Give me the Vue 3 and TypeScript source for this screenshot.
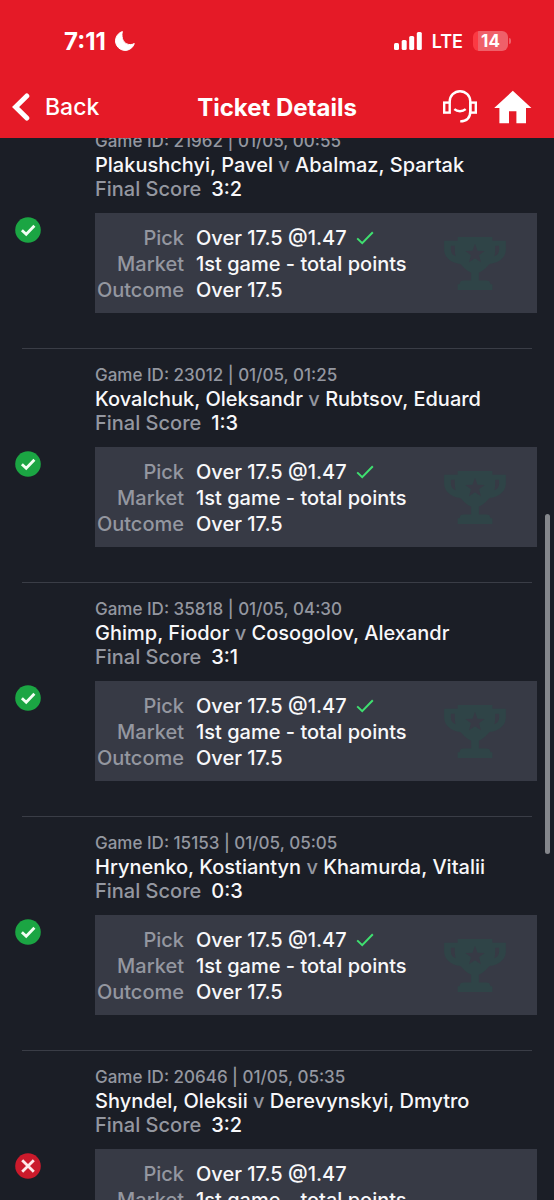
<script setup lang="ts">
interface Selection {
  id: string
  time: string
  home: string
  away: string
  score: string
  won: boolean
}

const selections: Selection[] = [
  { id: '21962', time: '01/05, 00:55', home: 'Plakushchyi, Pavel', away: 'Abalmaz, Spartak', score: '3:2', won: true },
  { id: '23012', time: '01/05, 01:25', home: 'Kovalchuk, Oleksandr', away: 'Rubtsov, Eduard', score: '1:3', won: true },
  { id: '35818', time: '01/05, 04:30', home: 'Ghimp, Fiodor', away: 'Cosogolov, Alexandr', score: '3:1', won: true },
  { id: '15153', time: '01/05, 05:05', home: 'Hrynenko, Kostiantyn', away: 'Khamurda, Vitalii', score: '0:3', won: true },
  { id: '20646', time: '01/05, 05:35', home: 'Shyndel, Oleksii', away: 'Derevynskyi, Dmytro', score: '3:2', won: false },
]
</script>

<template>
  <div class="screen">
    <header class="top">
      <div class="status-bar">
        <div class="clock">
          <span>7:11</span>
          <svg width="20" height="20" viewBox="0 0 20 20" aria-hidden="true">
            <path d="M7.4 0.6A9.6 9.6 0 1 0 19.3 12.6C14 15.2 8.6 12.4 7.4 7.4C6.8 4.6 6.8 2.4 7.4.6Z" fill="#fff" stroke="#fff" stroke-width="1" stroke-linejoin="round" />
          </svg>
        </div>
        <div class="signals">
          <svg width="28" height="18" viewBox="0 0 28 18" aria-hidden="true">
            <g fill="#fff">
              <rect x="0" y="11" width="5" height="7" rx="1.5" />
              <rect x="7.7" y="8" width="5" height="10" rx="1.5" />
              <rect x="15.2" y="4" width="5" height="14" rx="1.5" />
              <rect x="22.8" y="0" width="5" height="18" rx="1.5" />
            </g>
          </svg>
          <span class="network">LTE</span>
          <span class="battery">14</span>
        </div>
      </div>
      <nav class="nav">
        <button class="back" type="button">
          <svg width="18" height="28" viewBox="0 0 18 28" aria-hidden="true">
            <path d="M14.8 3L3.6 14L14.8 25" fill="none" stroke="#fff" stroke-width="5" stroke-linecap="round" stroke-linejoin="miter" />
          </svg>
          <span>Back</span>
        </button>
        <h1>Ticket Details</h1>
        <div class="actions">
          <button type="button" aria-label="Support">
            <svg width="34" height="34" viewBox="0 0 34 34" aria-hidden="true">
              <g fill="none" stroke="#fff" stroke-width="2.4">
                <path d="M6.7 12.6V11.5A10.3 10.3 0 0 1 27.3 11.5V21C27.3 27.2 24 31.3 17.2 31.4" />
                <rect x="1.2" y="12.6" width="5.5" height="10" />
                <rect x="27.3" y="12.6" width="5.5" height="10" />
                <path d="M11.3 19.2C14.3 22 19.5 22 22.7 19.2" />
              </g>
            </svg>
          </button>
          <button type="button" aria-label="Home">
            <svg width="38" height="34" viewBox="0 0 38 34" aria-hidden="true">
              <path d="M18.8 0.8L37.4 18H32V33.2H22.4V21.2H15V33.2H5.4V18H.2Z" fill="#fff" />
            </svg>
          </button>
        </div>
      </nav>
    </header>

    <main class="list">
      <article v-for="s in selections" :key="s.id" class="item">
        <div class="result">
          <svg width="26" height="26" viewBox="0 0 26 26" role="img" :aria-label="s.won ? 'Won' : 'Lost'">
            <circle cx="13" cy="13" r="12.8" :fill="s.won ? '#1ba543' : '#cb1a2b'" />
            <path v-if="s.won" d="M6.9 13.2L11.2 17.3L19.4 8.7" fill="none" stroke="#f2fff4" stroke-width="2.8" />
            <path v-else d="M7.2 7.2L18.8 18.8M18.8 7.2L7.2 18.8" fill="none" stroke="#ffe9ea" stroke-width="2.8" />
          </svg>
        </div>
        <div class="body">
          <p class="meta">Game ID: {{ s.id }} | {{ s.time }}</p>
          <h2>{{ s.home }} <span class="muted">v</span> {{ s.away }}</h2>
          <p class="score"><span class="muted">Final Score</span><span>{{ s.score }}</span></p>
          <div class="card">
            <dl>
              <dt>Pick</dt>
              <dd>
                Over 17.5 @1.47
                <svg v-if="s.won" class="tick" width="18" height="14" viewBox="0 0 18 14" aria-hidden="true">
                  <path d="M1.2 7.4L6.2 12.2L16.8 1.2" fill="none" stroke="#3fe070" stroke-width="2" />
                </svg>
              </dd>
              <dt>Market</dt>
              <dd>1st game - total points</dd>
              <dt>Outcome</dt>
              <dd>Over 17.5</dd>
            </dl>
            <svg v-if="s.won" class="trophy" width="62" height="54" viewBox="0 0 64 56" aria-hidden="true">
              <g fill="#2f4447">
                <path fill-rule="evenodd" d="M14 0H50V4H64V13C64 21 57 27 47 28C43 33 39 36 36 37V45H44Q48 45 48 49H50V55H14V49H16Q16 45 20 45H28V37C25 36 21 33 17 28C7 27 0 21 0 13V4H14ZM7 9V13C7 17 9 19 12 20C11 17 11 13 11 9ZM57 9H53C53 13 53 17 52 20C55 19 57 17 57 13ZM32 7L29.4 14.2L22 14.5L27.8 19L25.8 26.2L32 22L38.2 26.2L36.2 19L42 14.5L34.6 14.2Z" />
              </g>
            </svg>
          </div>
        </div>
      </article>
      <div class="scroll-thumb"></div>
    </main>
  </div>
</template>

<style>
body {
  margin: 0;
  background: #1b1e26;
}
</style>

<style scoped>
.screen {
  display: flex;
  flex-direction: column;
  height: 100vh;
  overflow: hidden;
  background: #1b1e26;
  color: #f8f8fa;
  font-family: Inter, "Liberation Sans", sans-serif;
  font-size: 20px;
  font-weight: 500;
}
.top {
  flex: none;
  background: #e51a27;
  color: #fff;
  z-index: 1;
}
.status-bar {
  display: flex;
  justify-content: space-between;
  align-items: center;
  height: 52px;
  padding: 15px 46px 9px 64px;
}
.clock,
.signals {
  display: flex;
  align-items: center;
}
.clock {
  gap: 9px;
  font-size: 24px;
  font-weight: 700;
}
.signals {
  gap: 10px;
}
.network {
  font-size: 18px;
  font-weight: 600;
}
.battery {
  position: relative;
  width: 35px;
  height: 20px;
  line-height: 20px;
  border-radius: 6px;
  background: linear-gradient(90deg, #fb3a43 14%, #ef6069 14%);
  font-size: 17px;
  font-weight: 700;
  text-align: center;
}
.battery::after {
  content: "";
  position: absolute;
  left: 100%;
  top: 7px;
  width: 2px;
  height: 6px;
  margin-left: 1px;
  border-radius: 0 2px 2px 0;
  background: #ef6069;
}
.nav {
  display: grid;
  grid-template-columns: 1fr auto 1fr;
  align-items: center;
  height: 62px;
  padding: 0 12px;
}
button {
  display: flex;
  align-items: center;
  padding: 0;
  border: 0;
  background: none;
  color: inherit;
  font: inherit;
}
.back {
  gap: 15px;
  font-size: 23px;
  font-weight: 500;
}
h1 {
  margin: 0;
  font-size: 24px;
  font-weight: 700;
}
.actions {
  display: flex;
  justify-content: flex-end;
  gap: 17px;
  padding-right: 10px;
}
.list {
  position: relative;
  flex: 1;
  min-height: 0;
  overflow: hidden;
}
.item {
  display: flex;
  margin: 0 22px;
  padding: 14px 0 35px;
  border-bottom: 1px solid #3a3d46;
}
.item:first-child {
  margin-top: -23px;
}
.result {
  flex: none;
  width: 73px;
  padding-top: 88px;
}
.result svg {
  display: block;
  margin-left: -7px;
}
.body {
  flex: 1;
  min-width: 0;
  margin-right: -5px;
}
p,
h2,
dl,
dd {
  margin: 0;
}
p,
h2 {
  font-size: 20px;
  font-weight: 500;
  line-height: 24px;
  white-space: nowrap;
}
.meta {
  color: #9497a0;
  font-size: 17px;
}
.muted,
dt {
  color: #9497a0;
}
.score {
  display: flex;
  gap: 10px;
}
.card {
  display: flex;
  align-items: center;
  justify-content: space-between;
  margin-top: 12px;
  padding: 12px 31px 10px 0;
  background: #373a45;
}
dl {
  display: grid;
  grid-template-columns: 89px auto;
  column-gap: 12px;
  line-height: 26px;
  white-space: nowrap;
}
dt {
  text-align: right;
}
.tick {
  margin-left: 4px;
}
.trophy {
  flex: none;
}
.scroll-thumb {
  position: absolute;
  top: 376px;
  right: 4px;
  width: 5px;
  height: 32%;
  border-radius: 3px;
  background: #85878c;
}
</style>
